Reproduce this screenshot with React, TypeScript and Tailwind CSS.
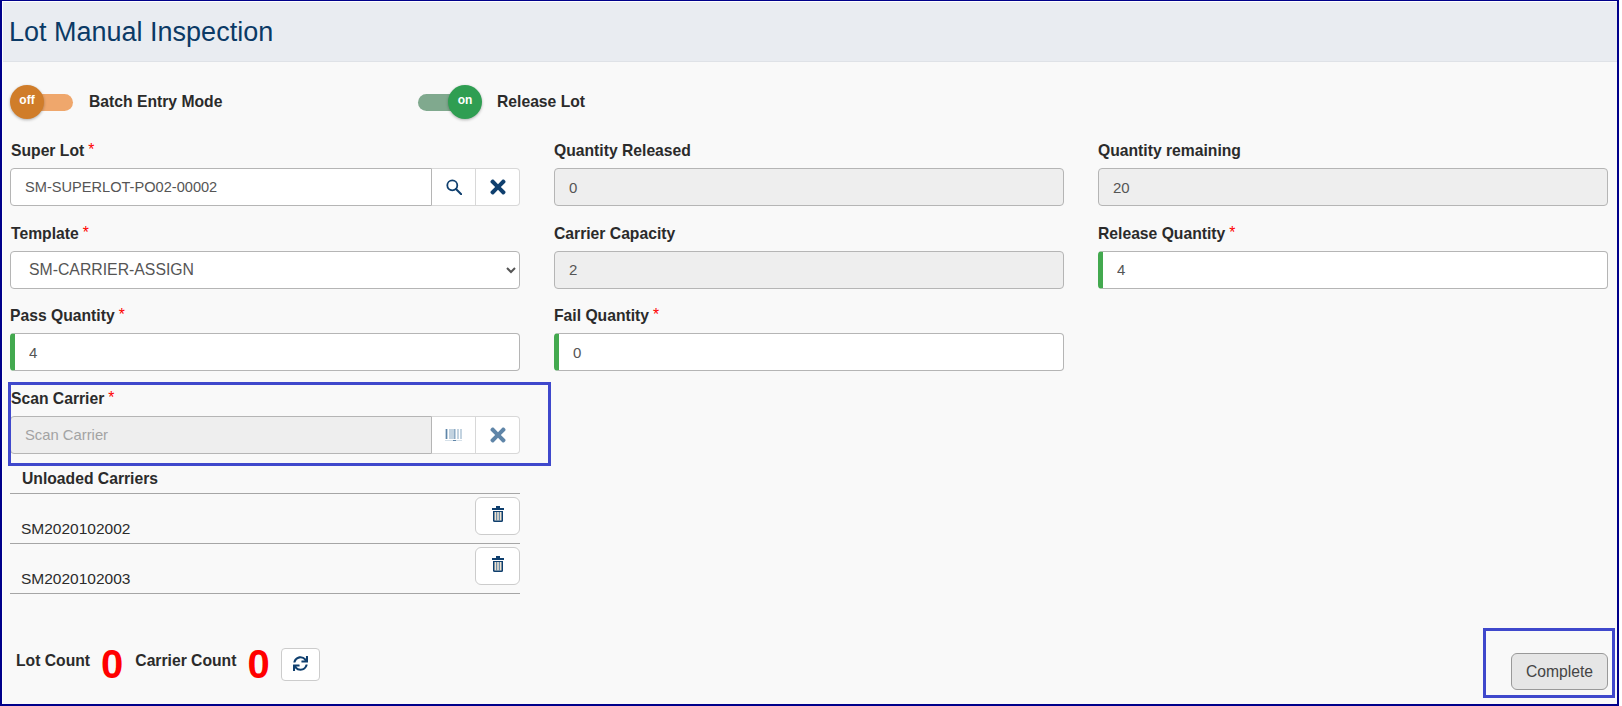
import React from 'react';
import { FaSync, FaTimes } from 'react-icons/fa';

const Req = () => <span className="text-[#f00] font-normal ml-1 relative -top-[1px]">*</span>;

const Label: React.FC<{ text: string; required?: boolean; nudge?: boolean }> = ({ text, required, nudge }) => (
  <label
    className={`block h-[19px] mb-2 text-[15.7px] leading-[19px] font-bold text-[#2b2b2b] whitespace-nowrap ${
      nudge ? 'pl-px' : ''
    }`}
  >
    {text}
    {required && <Req />}
  </label>
);

const Toggle: React.FC<{ on?: boolean }> = ({ on }) => (
  <div className="relative w-16 h-[34px] flex items-center">
    <div className={`h-[17px] rounded-full ${on ? 'w-[58px] bg-[#80a98e]' : 'w-[59px] ml-1 bg-[#efa76c]'}`} />
    <div
      className={`absolute top-0 w-[34px] h-[34px] rounded-full flex items-center justify-center text-white text-xs font-bold pb-1 shadow-[0_1px_3px_rgba(0,0,0,0.3)] ${
        on ? 'right-0 bg-[#2f9e52]' : 'left-0 bg-[#d07d2a]'
      }`}
    >
      {on ? 'on' : 'off'}
    </div>
  </div>
);

const TextField: React.FC<{ value: string; disabled?: boolean; valid?: boolean }> = ({ value, disabled, valid }) => (
  <input
    readOnly
    value={value}
    className={`block w-full h-[38px] rounded border border-[#b5b5b5] pl-[14px] text-[15px] text-[#555] outline-none ${
      disabled ? 'bg-[#eee]' : 'bg-white'
    } ${valid ? 'border-l-[5px] border-l-[#43a94f]' : ''}`}
  />
);

const IconBtn: React.FC<{ last?: boolean; children: React.ReactNode }> = ({ last, children }) => (
  <div
    className={`w-[44px] flex items-center justify-center bg-white border-t border-b border-r border-[#d8d8d8] ${
      last ? 'rounded-r' : ''
    }`}
  >
    {children}
  </div>
);

const SearchIcon = () => (
  <svg width="16" height="16" viewBox="0 0 16 16" fill="none" stroke="#0f3f6e">
    <circle cx="6.3" cy="6.3" r="5" strokeWidth="1.8" />
    <path d="M10 10l5.2 5.2" strokeWidth="2" strokeLinecap="round" />
  </svg>
);

const TrashIcon = () => (
  <svg width="12" height="16" viewBox="0 0 12 16">
    <path d="M4 0h4v2h4v2H0V2h4z" fill="#0f3f6e" />
    <path d="M1 5h10v9.5a1.5 1.5 0 0 1-1.5 1.5h-7A1.5 1.5 0 0 1 1 14.5z" fill="#0f3f6e" />
    <rect x="2.5" y="6" width="7" height="8.5" fill="#f0e4d2" />
    <rect x="4.2" y="6" width="1" height="8.5" fill="#4a779e" />
    <rect x="6.8" y="6" width="1" height="8.5" fill="#4a779e" />
  </svg>
);

const BarcodeIcon = () => (
  <svg width="17" height="12" viewBox="0 0 17 12">
    <rect x="0" y="0" width="17" height="10" fill="#c3d3e0" />
    <rect x="1" y="0" width="1" height="10" fill="#5f85a8" />
    <rect x="3" y="0" width="1" height="10" fill="#fff" />
    <rect x="9" y="0" width="1" height="10" fill="#8fabc4" />
    <rect x="11" y="0" width="1" height="10" fill="#fff" />
    <rect x="14" y="0" width="1" height="10" fill="#fff" />
    <rect x="0" y="11" width="17" height="1" fill="#d5e0e9" />
    <rect x="8" y="11" width="3" height="1" fill="#5f85a8" />
  </svg>
);

const ListRow: React.FC<{ code: string }> = ({ code }) => (
  <div className="relative h-[50px] border-b border-[#a6a6a6] pl-[11px] flex items-end pb-[5px] text-[15.5px] leading-[18px] text-[#2b2b2b]">
    {code}
    <button className="absolute right-0 top-[3px] w-[45px] h-[38px] bg-white border border-[#ccc] rounded-md flex items-center justify-center pb-1">
      <TrashIcon />
    </button>
  </div>
);

export default function App() {
  return (
    <div className="relative w-[1622px] h-[706px] bg-white overflow-hidden font-['Liberation_Sans',Arial,sans-serif]">
      <div className="w-[1619px] h-full border-[#00008b] border-t border-l-2 border-r-2 border-b-2 pl-px pt-px">
        <div className="h-full flex flex-col bg-[#f9f9f9]">
          <header className="h-[60px] shrink-0 bg-[#e9ecf1] border-b border-[#dfe2e7] pl-[6px] flex items-center">
            <h1 className="text-[27px] leading-8 text-[#0b3a66] font-normal">Lot Manual Inspection</h1>
          </header>

          <div className="pl-[7px] pt-[23px]">
            <div className="flex items-center h-[34px]">
              <Toggle />
              <span className="ml-[15px] w-[329px] text-[15.7px] font-bold text-[#2b2b2b]">Batch Entry Mode</span>
              <Toggle on />
              <span className="ml-[15px] text-[15.7px] font-bold text-[#2b2b2b]">Release Lot</span>
            </div>

            <div className="mt-[22px] grid grid-cols-[510px_510px_510px] gap-x-[34px] gap-y-[17.7px]">
              <div>
                <Label text="Super Lot" required nudge />
                <div className="flex h-[38px]">
                  <div className="flex-1">
                    <input
                      readOnly
                      value="SM-SUPERLOT-PO02-00002"
                      className="block w-full h-[38px] rounded-l border border-[#b5b5b5] bg-white pl-[14px] text-[14.6px] text-[#555] outline-none"
                    />
                  </div>
                  <IconBtn><SearchIcon /></IconBtn>
                  <IconBtn last><FaTimes className="text-[#0f3f6e] text-[22px]" /></IconBtn>
                </div>
              </div>
              <div>
                <Label text="Quantity Released" />
                <TextField value="0" disabled />
              </div>
              <div>
                <Label text="Quantity remaining" />
                <TextField value="20" disabled />
              </div>

              <div>
                <Label text="Template" required nudge />
                <select className="block w-full h-[38px] rounded border border-[#b5b5b5] bg-white pl-[14px] text-[15.8px] text-[#555] outline-none">
                  <option>SM-CARRIER-ASSIGN</option>
                </select>
              </div>
              <div>
                <Label text="Carrier Capacity" />
                <TextField value="2" disabled />
              </div>
              <div>
                <Label text="Release Quantity" required />
                <TextField value="4" valid />
              </div>

              <div>
                <Label text="Pass Quantity" required />
                <TextField value="4" valid />
              </div>
              <div>
                <Label text="Fail Quantity" required />
                <TextField value="0" valid />
              </div>
              <div />

              <div>
                <Label text="Scan Carrier" required nudge />
                <div className="flex h-[38px]">
                  <div className="flex-1">
                    <input
                      readOnly
                      placeholder="Scan Carrier"
                      className="block w-full h-[38px] rounded-l border border-[#b5b5b5] bg-[#eee] pl-[14px] text-[14.8px] placeholder:text-[#a3a3a3] outline-none"
                    />
                  </div>
                  <IconBtn><BarcodeIcon /></IconBtn>
                  <IconBtn last><FaTimes className="text-[#5f85a8] text-[22px]" /></IconBtn>
                </div>
              </div>
            </div>

            <div className="w-[510px] mt-[15px]">
              <div className="h-[25px] border-b border-[#a6a6a6] pl-3 text-[15.7px] leading-[20px] font-bold text-[#2b2b2b]">
                Unloaded Carriers
              </div>
              <ListRow code="SM2020102002" />
              <ListRow code="SM2020102003" />
            </div>
          </div>

          <footer className="mt-auto flex items-end justify-between pl-[13px] pr-[9px] pb-[14px]">
            <div className="flex items-center h-[33px] mb-[9px] text-[#2b2b2b] font-bold text-[15.7px]">
              <span className="-mt-[8px]">Lot Count</span>
              <span className="ml-[11px] -mt-[2px] text-[40px] leading-none text-[#f00]">0</span>
              <span className="ml-[12px] -mt-[8px]">Carrier Count</span>
              <span className="ml-[11px] -mt-[2px] text-[40px] leading-none text-[#f00]">0</span>
              <button className="ml-[11px] w-[39px] h-[33px] bg-white border border-[#ccc] rounded flex items-center justify-center pb-[3px]">
                <FaSync className="text-[#0f3f6e] text-[15px]" />
              </button>
            </div>
            <button className="w-[97px] h-[37px] rounded-md border border-[#999] bg-[#e6e6e6] text-[15.7px] text-[#444]">
              Complete
            </button>
          </footer>
        </div>
      </div>

      {/* annotation boxes drawn over the screenshot */}
      <div className="absolute left-2 top-[382px] w-[543px] h-[84px] border-[3px] border-[#3f48cc] pointer-events-none" />
      <div className="absolute left-[1483px] top-[628px] w-[132px] h-[70px] border-[3px] border-[#3f48cc] pointer-events-none" />
    </div>
  );
}
